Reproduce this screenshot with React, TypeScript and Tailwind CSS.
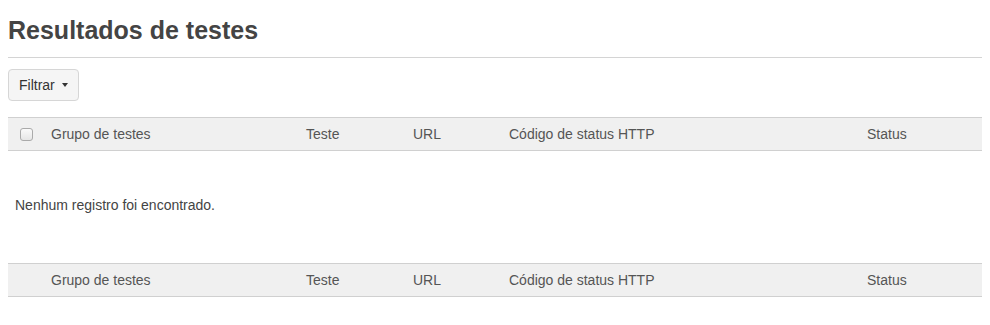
const cols = [
  { label: 'Grupo de testes', w: 'w-[255px]' },
  { label: 'Teste', w: 'w-[107px]' },
  { label: 'URL', w: 'w-[96px]' },
  { label: 'Código de status HTTP', w: 'w-[358px]' },
  { label: 'Status', w: 'flex-1' },
]

function HeaderRow({ checkbox }: { checkbox?: boolean }) {
  return (
    <div className="flex h-[34px] items-center border-y border-[#d0d0d0] bg-[#f0f0f0] text-[14px] text-[#555]">
      <div className="flex w-[35px] items-center pl-[12px]">
        {checkbox && (
          <span className="block h-[13px] w-[13px] rounded-[3px] border border-[#aaa] bg-gradient-to-b from-[#fafafa] to-[#e6e6e6]" />
        )}
      </div>
      {cols.map((c) => (
        <div key={c.label} className={`${c.w} px-2`}>
          {c.label}
        </div>
      ))}
    </div>
  )
}

export default function App() {
  return (
    <div className="bg-white px-2 font-['Liberation_Sans',Arial,sans-serif] text-[#444]">
      <h1 className="pt-[13px] pb-[10px] text-[25px] leading-[34px] font-bold text-[#444]">
        Resultados de testes
      </h1>
      <div className="border-t border-[#d4d4d4]" />
      <div className="pt-[11px]">
        <button
          type="button"
          className="flex h-[32px] items-center gap-[7px] rounded-[4px] border border-[#d6d6d6] bg-[#f5f5f5] pr-[10px] pl-[10px] text-[14px] text-[#333]"
        >
          Filtrar
          <span className="block h-0 w-0 border-x-[3px] border-t-[4px] border-x-transparent border-t-[#333]" />
        </button>
      </div>
      <div className="mt-[16px]">
        <HeaderRow checkbox />
      </div>
      <div className="flex h-[112px] items-center px-[7px] pb-[4px] text-[14px] text-[#444]">
        Nenhum registro foi encontrado.
      </div>
      <HeaderRow />
    </div>
  )
}
